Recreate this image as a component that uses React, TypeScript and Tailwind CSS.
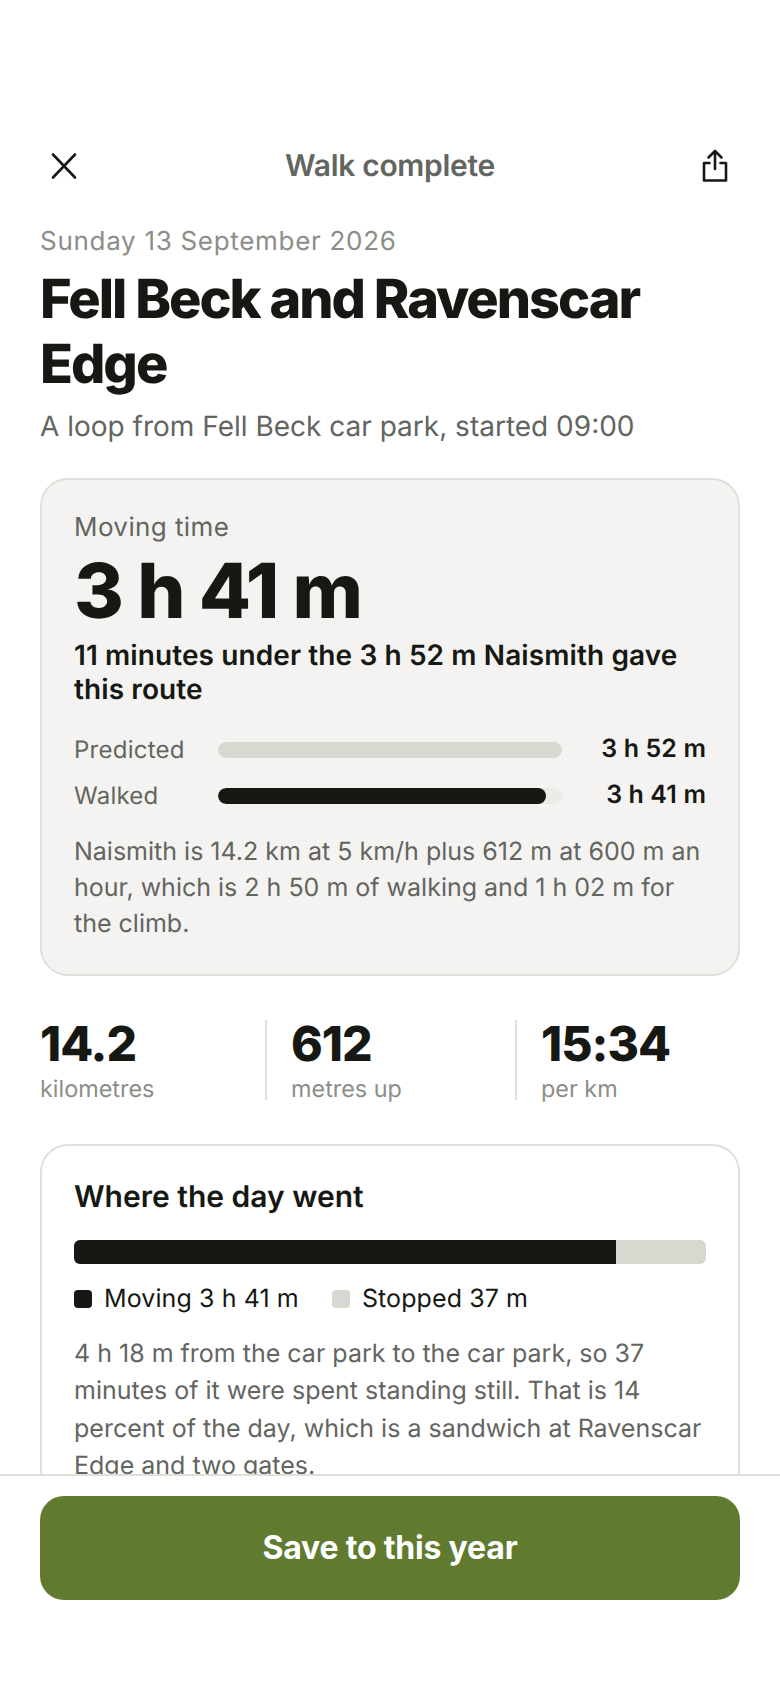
const fontStack = { fontFamily: "Inter, 'Noto Sans', sans-serif" };

function CloseIcon() {
  return (
    <svg width="30" height="30" viewBox="0 0 30 30" fill="none" stroke="#161814" strokeWidth="2.6" strokeLinecap="round">
      <path d="M4 3.5 L26 26.5 M26 3.5 L4 26.5" />
    </svg>
  );
}

function ShareIcon() {
  return (
    <svg width="28" height="34" viewBox="0 0 28 34" fill="none" stroke="#161814" strokeWidth="2.6" strokeLinecap="round" strokeLinejoin="round">
      <path d="M14 20 V2 M7.5 8.5 L14 2 L20.5 8.5" />
      <path d="M8.5 14 H3 V31.5 H25 V14 H19.5" />
    </svg>
  );
}

function CompareRow({ label, value, bar, pct }: { label: string; value: string; bar: string; pct: number }) {
  return (
    <div className="flex h-[38px] items-center">
      <div className="w-[144px] text-[24px] tracking-[0.25px] text-[#63655f]">{label}</div>
      <div className="h-[16px] w-[344px] overflow-hidden rounded-full bg-[#ebeae6]">
        <div className={`h-full rounded-full ${bar}`} style={{ width: `${pct}%` }} />
      </div>
      <div className="flex-1 text-right text-[25px] font-semibold tracking-[0.1px] text-[#161814]">{value}</div>
    </div>
  );
}

function Stat({ value, label, divided, width }: { value: string; label: string; divided?: boolean; width: string }) {
  return (
    <div className={`${width} ${divided ? "border-l-2 border-[#dfdfd9] pl-[24px]" : ""}`}>
      <div className="text-[48px] font-extrabold leading-[48px] tracking-[-1px] text-[#161814]">{value}</div>
      <div className="mt-[10px] text-[23.4px] leading-[22px] text-[#8c8e88]">{label}</div>
    </div>
  );
}

export default function App() {
  return (
    <div style={fontStack} className="flex h-[1688px] w-[780px] flex-col overflow-hidden bg-white [text-rendering:geometricPrecision]">
      <main className="min-h-0 flex-1 overflow-hidden px-[40px] pt-[130px]">
        <header className="flex h-[72px] items-center justify-between pl-[9px] pr-[11px]">
          <CloseIcon />
          <div className="text-[30px] font-semibold tracking-[-0.3px] text-[#63655f]">Walk complete</div>
          <ShareIcon />
        </header>

        <div className="mt-[23px] text-[26px] leading-[34px] tracking-[0.7px] text-[#8c8e88]">Sunday 13 September 2026</div>
        <h1 className="mt-[8px] text-[54px] font-extrabold leading-[65px] tracking-[-2px] text-[#161814]">Fell Beck and Ravenscar Edge</h1>
        <p className="mt-[9px] text-[28px] leading-[40px] text-[#63655f]">A loop from Fell Beck car park, started 09:00</p>

        <section className="mt-[32px] rounded-[28px] border-2 border-[#e0dfd9] bg-[#f4f3f1] px-[32px] pb-[32px] pt-[31px]">
          <div className="text-[26px] leading-[34px] tracking-[0.4px] text-[#63655f]">Moving time</div>
          <div className="mt-[2px] text-[76px] font-extrabold leading-[88px] tracking-[-1.7px] text-[#161814]">3 h 41 m</div>
          <div className="mt-[3px] text-[28px] font-semibold leading-[34px] tracking-[0.1px] text-[#161814]">11 minutes under the 3 h 52 m Naismith gave this route</div>
          <div className="mt-[25px] flex flex-col gap-[8px]">
            <CompareRow label="Predicted" value="3 h 52 m" bar="bg-[#d8d8d1]" pct={100} />
            <CompareRow label="Walked" value="3 h 41 m" bar="bg-[#161814]" pct={95.3} />
          </div>
          <p className="mt-[19px] text-[25px] leading-[36px] text-[#63655f]">Naismith is 14.2 km at 5 km/h plus 612 m at 600 m an hour, which is 2 h 50 m of walking and 1 h 02 m for the climb.</p>
        </section>

        <div className="mt-[44px] flex">
          <Stat width="w-[225px]" value="14.2" label="kilometres" />
          <Stat width="w-[250px]" value="612" label="metres up" divided />
          <Stat width="w-[225px]" value="15:34" label="per km" divided />
        </div>

        <section className="mt-[44px] rounded-[28px] border-2 border-[#e0dfd9] bg-white px-[32px] pb-[32px] pt-[31px]">
          <h2 className="text-[30px] font-semibold leading-[40px] text-[#161814]">Where the day went</h2>
          <div className="mt-[23px] flex h-[24px] overflow-hidden rounded-[6px] bg-[#d8d8d1]">
            <div className="h-full bg-[#161814]" style={{ width: "85.7%" }} />
          </div>
          <div className="mt-[18px] flex items-center gap-[33px] text-[25px] leading-[34px] tracking-[0.1px] text-[#161814]">
            <div className="flex items-center gap-[12px]">
              <span className="h-[18px] w-[18px] rounded-[4px] bg-[#161814]" />
              Moving 3 h 41 m
            </div>
            <div className="flex items-center gap-[12px]">
              <span className="h-[18px] w-[18px] rounded-[4px] bg-[#d8d8d1]" />
              Stopped 37 m
            </div>
          </div>
          <p className="mt-[20px] text-[25px] leading-[37.3px] text-[#63655f]">4 h 18 m from the car park to the car park, so 37 minutes of it were spent standing still. That is 14 percent of the day, which is a sandwich at Ravenscar Edge and two gates.</p>
        </section>
      </main>

      <footer className="h-[214px] shrink-0 border-t-2 border-[#e0dfd9] bg-white px-[40px] pt-[20px]">
        <button className="h-[104px] w-full rounded-[24px] bg-[#607b30] text-[32px] font-bold tracking-[-0.2px] text-white">Save to this year</button>
      </footer>
    </div>
  );
}
